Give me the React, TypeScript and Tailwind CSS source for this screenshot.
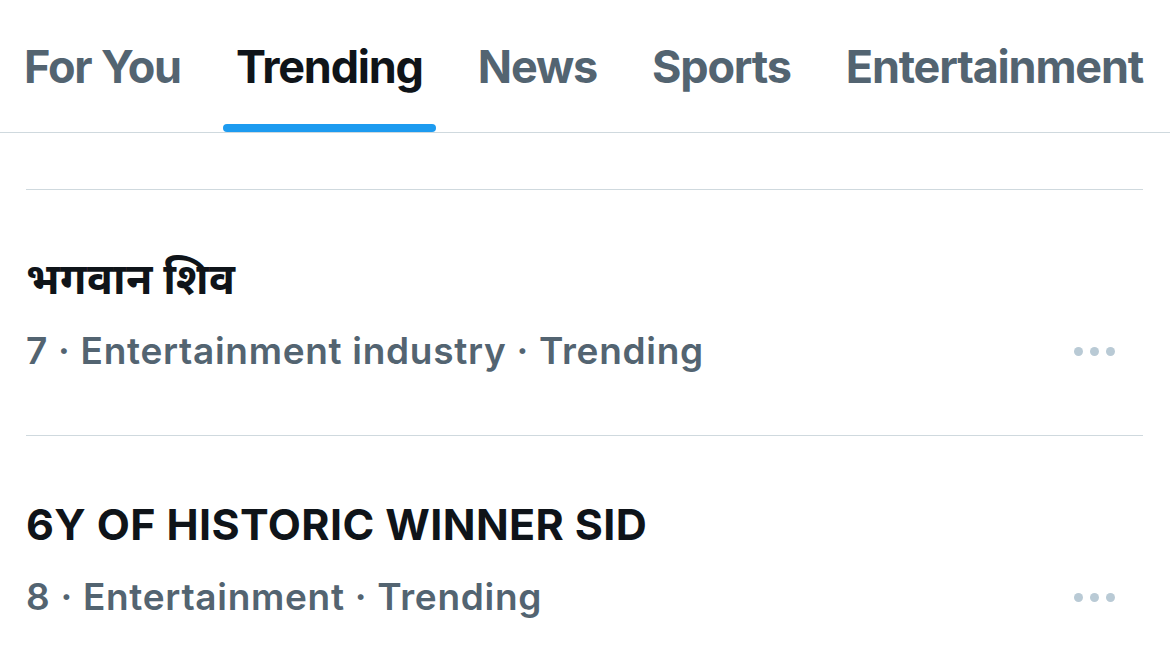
import React from "react";

const tabs = ["For You", "Trending", "News", "Sports", "Entertainment"];

const trends = [
  { title: "भगवान शिव", meta: "7 · Entertainment industry · Trending" },
  { title: "6Y OF HISTORIC WINNER SID", meta: "8 · Entertainment · Trending" },
];

function Dots() {
  return (
    <div className="flex items-center gap-[7px]">
      <span className="block w-[9px] h-[9px] rounded-full bg-[#b9cad5]" />
      <span className="block w-[9px] h-[9px] rounded-full bg-[#b9cad5]" />
      <span className="block w-[9px] h-[9px] rounded-full bg-[#b9cad5]" />
    </div>
  );
}

export default function App() {
  return (
    <div
      className="w-[1170px] h-[661px] overflow-hidden bg-white"
      style={{ fontFamily: 'Inter, "Noto Sans Devanagari", "Noto Sans", sans-serif' }}
    >
      <div className="h-[133px] border-b border-[#cfd9de] flex items-start pl-[24px] gap-[55px]">
        {tabs.map((t) => {
          const active = t === "Trending";
          return (
            <div key={t} className="relative h-[132px] pt-[44px]">
              <div
                className={
                  "text-[45px] leading-[45px] font-bold tracking-[-1.2px] whitespace-nowrap " +
                  (active ? "text-[#0f1419]" : "text-[#536471]")
                }
              >
                {t}
              </div>
              {active && (
                <div className="absolute bottom-0 -left-[13px] -right-[13px] h-[8px] rounded-full bg-[#1d9bf0]" />
              )}
            </div>
          );
        })}
      </div>
      <div className="h-[56px]" />
      <div className="ml-[26px] mr-[27px]">
        {trends.map((tr, i) => (
          <div key={i} className="border-t border-[#cfd9de] h-[246px] pt-[62px]">
            <div className="text-[43px] leading-[52px] font-bold text-[#0f1419] tracking-[0.4px] whitespace-nowrap">
              {tr.title}
            </div>
            <div className="mt-[25px] flex items-center justify-between pr-[28px]">
              <div className="text-[37px] leading-[44px] font-semibold text-[#536471] tracking-[0.7px] whitespace-nowrap">
                {tr.meta}
              </div>
              <Dots />
            </div>
          </div>
        ))}
      </div>
    </div>
  );
}
